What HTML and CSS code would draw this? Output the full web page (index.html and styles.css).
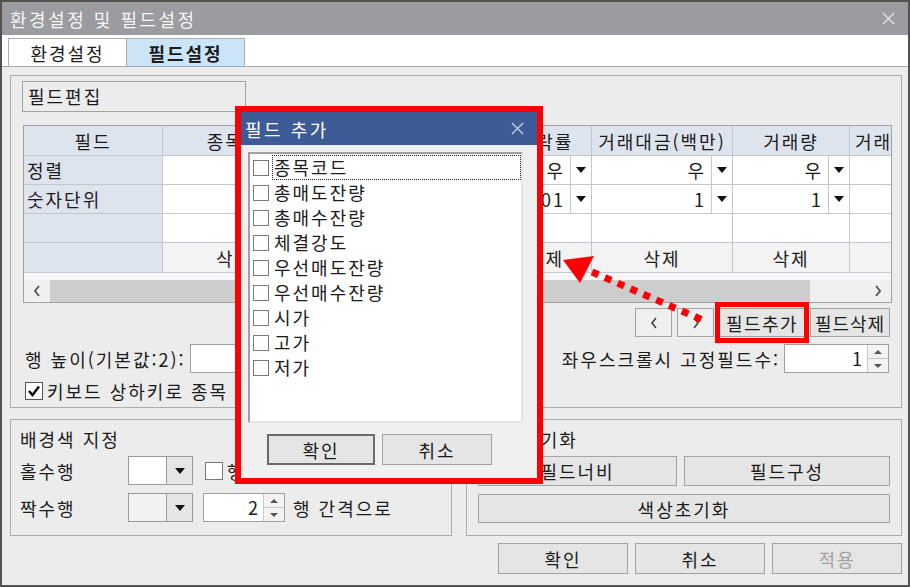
FILE: index.html
```html
<!DOCTYPE html>
<html lang="ko">
<head>
  <meta charset="UTF-8" />
  <title>환경설정 및 필드설정</title>
  <link rel="stylesheet" href="styles.css">
</head>
<body>

<div class="window">
  <div class="titlebar">
    <span class="title">환경설정 및 필드설정</span>
    <svg class="close" viewBox="0 0 14 14"><path d="M1 1L13 13M13 1L1 13" /></svg>
  </div>

  <div class="tabs">
    <div class="tab">환경설정</div>
    <div class="tab active">필드설정</div>
  </div>

  <div class="content">
    <div class="panel">
      <div class="caption">필드편집</div>

      <div class="grid">
        <table class="fields">
          <colgroup>
            <col><col><col><col><col><col><col>
          </colgroup>
          <tr>
            <th>필드</th><th>종목명</th><th>현재가</th><th>등락률</th><th>거래대금(백만)</th><th>거래량</th><th class="cut">거래</th>
          </tr>
          <tr>
            <td class="lbl">정렬</td>
            <td></td>
            <td><div class="cmb"><span class="v">우</span><span class="a"><i class="tri"></i></span></div></td>
            <td><div class="cmb"><span class="v">우</span><span class="a"><i class="tri"></i></span></div></td>
            <td><div class="cmb"><span class="v">우</span><span class="a"><i class="tri"></i></span></div></td>
            <td><div class="cmb"><span class="v">우</span><span class="a"><i class="tri"></i></span></div></td>
            <td></td>
          </tr>
          <tr>
            <td class="lbl">숫자단위</td>
            <td></td>
            <td><div class="cmb"><span class="v">1</span><span class="a"><i class="tri"></i></span></div></td>
            <td><div class="cmb"><span class="v">0.01</span><span class="a"><i class="tri"></i></span></div></td>
            <td><div class="cmb"><span class="v">1</span><span class="a"><i class="tri"></i></span></div></td>
            <td><div class="cmb"><span class="v">1</span><span class="a"><i class="tri"></i></span></div></td>
            <td></td>
          </tr>
          <tr class="blank">
            <td class="lbl"></td><td></td><td></td><td></td><td></td><td></td><td></td>
          </tr>
          <tr class="del">
            <td class="lbl"></td><td>삭제</td><td>삭제</td><td>삭제</td><td>삭제</td><td>삭제</td><td></td>
          </tr>
        </table>
        <div class="hscroll">
          <span class="sarr"><svg viewBox="0 0 8 12"><path d="M6 1L2 6L6 11" /></svg></span>
          <span class="thumb"></span>
          <span class="track"></span>
          <span class="sarr"><svg viewBox="0 0 8 12"><path d="M2 1L6 6L2 11" /></svg></span>
        </div>
      </div>

      <div class="navrow">
        <button class="btn nav"><svg viewBox="0 0 8 12"><path d="M6 1L2 6L6 11" /></svg></button>
        <button class="btn nav"><svg viewBox="0 0 8 12"><path d="M2 1L6 6L2 11" /></svg></button>
        <button class="btn field-add">필드추가</button>
        <button class="btn field-del">필드삭제</button>
      </div>

      <div class="optrow">
        <div class="opt">
          <span>행 높이(기본값:2):</span>
          <span class="textbox"></span>
        </div>
        <div class="opt">
          <span>좌우스크롤시 고정필드수:</span>
          <div class="spin fixed">
            <span class="val">1</span>
            <span class="spin-btns"><i><b class="up"></b></i><i><b class="dn"></b></i></span>
          </div>
        </div>
      </div>

      <div class="checkrow">
        <span class="chk on"><svg viewBox="0 0 16 16"><path d="M3 8L6.5 12L13 3.5" /></svg></span>
        <span>키보드 상하키로 종목 이동</span>
      </div>
    </div>

    <div class="groups">
      <div class="group bg">
        <div class="group-title">배경색 지정</div>
        <div class="bgrow">
          <span class="name">홀수행</span>
          <div class="combo"><span class="field"></span><span class="drop"><i class="tri"></i></span></div>
          <span class="chk"></span>
          <span class="chk-text">행 색상 사용</span>
        </div>
        <div class="bgrow">
          <span class="name">짝수행</span>
          <div class="combo off"><span class="field"></span><span class="drop"><i class="tri"></i></span></div>
          <div class="spin step">
            <span class="val">2</span>
            <span class="spin-btns"><i><b class="up"></b></i><i><b class="dn"></b></i></span>
          </div>
          <span class="after">행 간격으로</span>
        </div>
      </div>

      <div class="group reset">
        <div class="group-title">설정 초기화</div>
        <div class="reset-grid">
          <button class="btn">필드너비</button>
          <button class="btn">필드구성</button>
          <button class="btn wide">색상초기화</button>
        </div>
      </div>
    </div>

    <div class="actions">
      <button class="btn">확인</button>
      <button class="btn">취소</button>
      <button class="btn disabled">적용</button>
    </div>
  </div>

  <!-- 필드 추가 팝업 (빨간 강조 테두리) -->
  <div class="popup">
    <div class="popup-title">
      <span>필드 추가</span>
      <svg class="close" viewBox="0 0 14 14"><path d="M1 1L13 13M13 1L1 13" /></svg>
    </div>
    <div class="popup-body">
      <ul class="field-list">
        <li><span class="box"></span><span class="txt focus">종목코드</span></li>
        <li><span class="box"></span><span class="txt">총매도잔량</span></li>
        <li><span class="box"></span><span class="txt">총매수잔량</span></li>
        <li><span class="box"></span><span class="txt">체결강도</span></li>
        <li><span class="box"></span><span class="txt">우선매도잔량</span></li>
        <li><span class="box"></span><span class="txt">우선매수잔량</span></li>
        <li><span class="box"></span><span class="txt">시가</span></li>
        <li><span class="box"></span><span class="txt">고가</span></li>
        <li><span class="box"></span><span class="txt">저가</span></li>
      </ul>
      <div class="popup-btns">
        <button class="btn default">확인</button>
        <button class="btn">취소</button>
      </div>
    </div>
  </div>

  <svg class="pointer" viewBox="0 0 160 80">
    <path class="dots" d="M37 22L150 71" />
    <polygon points="8,10 39,6 25,33" />
  </svg>
  <div class="highlight"></div>
</div>

</body>
</html>
```

FILE: styles.css
```css
* {
  box-sizing: border-box;
}
body {
  margin: 0;
  font-family: "Noto Sans CJK KR", "Noto Sans", sans-serif;
  font-size: 18px;
  letter-spacing: 2px;
  color: #1b1b1b;
  background: #fff;
}
button {
  font: inherit;
  letter-spacing: inherit;
  color: inherit;
}

.window {
  position: relative;
  width: 910px;
  height: 587px;
  border: 2px solid #525252;
  background: #ececec;
  display: flex;
  flex-direction: column;
}

/* title bar */
.titlebar {
  flex: none;
  height: 33px;
  background: #9b9ca0;
  color: #f5f5f5;
  display: flex;
  align-items: center;
  justify-content: space-between;
  padding: 0 13px 0 8px;
}
.titlebar .title {
  letter-spacing: 2.5px;
}
.close {
  width: 13px;
  height: 13px;
  fill: none;
  stroke: #e4e4e4;
  stroke-width: 1.4;
}

/* tabs */
.tabs {
  flex: none;
  height: 32px;
  background: #fff;
  border-bottom: 1px solid #a9a9a9;
  display: flex;
  align-items: flex-end;
  padding-left: 6px;
}
.tab {
  width: 119px;
  height: 28px;
  border: 1px solid #acacac;
  border-bottom: none;
  display: flex;
  align-items: center;
  justify-content: center;
}
.tab + .tab {
  border-left: none;
}
.tab.active {
  width: 118px;
  background: #cce4f7;
  font-weight: bold;
}

.content {
  flex: 1;
  padding: 8px 6px 0 8px;
}

/* field edit panel */
.panel {
  height: 333px;
  border: 1px solid #adadad;
  padding: 5px 9px 0 11px;
}
.caption {
  width: 224px;
  height: 31px;
  border: 1px solid #a3a3a3;
  padding-left: 5px;
  line-height: 29px;
}

.grid {
  margin: 13px 0 0 1px;
  width: 869px;
  height: 178px;
  border: 1px solid #a0a0a0;
  background: #f7f7f7;
  overflow: hidden;
  display: flex;
  flex-direction: column;
}
.fields {
  border-collapse: separate;
  border-spacing: 0;
  table-layout: fixed;
  width: 976px;
  background: #fff;
}
.fields col:nth-child(1) { width: 139px; }
.fields col:nth-child(2) { width: 144px; }
.fields col:nth-child(3) { width: 193px; }
.fields col:nth-child(4) { width: 92px; }
.fields col:nth-child(5) { width: 141px; }
.fields col:nth-child(6) { width: 117px; }
.fields col:nth-child(7) { width: 150px; }
.fields th,
.fields td {
  height: 29px;
  padding: 0;
  border-right: 1px solid #c3c6cc;
  border-bottom: 1px solid #c3c6cc;
  font-weight: normal;
  text-align: center;
  white-space: nowrap;
  overflow: hidden;
}
.fields th {
  height: 30px;
  background: #dde4ee;
}
.fields th.cut {
  text-align: left;
  padding-left: 5px;
}
.fields td.lbl {
  background: #dde4ee;
  text-align: left;
  padding-left: 3px;
}
.fields tr.del td {
  height: 30px;
  background: #f3f3f3;
}
.fields tr.del td.lbl {
  background: #dde4ee;
}
.cmb {
  display: flex;
  height: 28px;
}
.cmb .v {
  flex: 1;
  text-align: right;
  padding-right: 5px;
  line-height: 28px;
}
.cmb .a {
  width: 21px;
  border-left: 1px solid #c3c6cc;
  display: flex;
  align-items: center;
  justify-content: center;
}
.tri {
  width: 0;
  height: 0;
  border-left: 5px solid transparent;
  border-right: 5px solid transparent;
  border-top: 6px solid #111;
}

.hscroll {
  margin-top: auto;
  height: 22px;
  display: flex;
  background: #f0f0f0;
}
.sarr {
  width: 26px;
  display: flex;
  align-items: center;
  justify-content: center;
}
.sarr svg,
.nav svg {
  width: 8px;
  height: 12px;
  fill: none;
  stroke: #5a5a5a;
  stroke-width: 2;
}
.thumb {
  width: 760px;
  background: #cdcdcd;
}
.track {
  flex: 1;
}

/* buttons */
.btn {
  height: 100%;
  padding: 0;
  background: #e5e5e5;
  border: 1px solid #a2a2a2;
  display: flex;
  align-items: center;
  justify-content: center;
}
.btn.disabled {
  color: #a3a3a3;
}

.navrow {
  height: 29px;
  margin: 5px 2px 0 0;
  display: flex;
  justify-content: flex-end;
  gap: 5px;
}
.navrow .nav {
  width: 37px;
  background: #efefef;
}
.navrow .nav svg {
  stroke: #333;
  stroke-width: 1.4;
}
.navrow .field-add {
  width: 86px;
  letter-spacing: 1.5px;
}
.navrow .field-del {
  width: 80px;
  letter-spacing: 1px;
}

.optrow {
  height: 29px;
  margin-top: 7px;
  padding: 0 3px;
  display: flex;
  justify-content: space-between;
  align-items: center;
}
.opt {
  display: flex;
  align-items: center;
  gap: 4px;
  height: 100%;
}
.textbox {
  width: 70px;
  height: 100%;
  background: #fff;
  border: 1px solid #a0a0a0;
}

.spin {
  height: 29px;
  display: flex;
  background: #fff;
  border: 1px solid #a0a0a0;
}
.spin .val {
  flex: 1;
  text-align: right;
  padding-right: 3px;
  line-height: 27px;
}
.spin-btns {
  width: 21px;
  display: flex;
  flex-direction: column;
  border-left: 1px solid #c8c8c8;
}
.spin-btns i {
  flex: 1;
  display: flex;
  align-items: center;
  justify-content: center;
  background: #f3f3f3;
}
.spin-btns i + i {
  border-top: 1px solid #c8c8c8;
}
.up,
.dn {
  width: 0;
  height: 0;
  border-left: 4px solid transparent;
  border-right: 4px solid transparent;
}
.up {
  border-bottom: 4px solid #555;
}
.dn {
  border-top: 4px solid #555;
}
.spin.fixed {
  width: 105px;
}
.spin.step {
  width: 82px;
  margin-left: 10px;
}

.checkrow {
  margin-top: 5px;
  padding-left: 3px;
  display: flex;
  align-items: center;
  gap: 4px;
}
.chk {
  width: 18px;
  height: 18px;
  background: #fff;
  border: 1px solid #555;
  display: flex;
}
.chk svg {
  width: 16px;
  height: 16px;
  fill: none;
  stroke: #000;
  stroke-width: 2.4;
}

/* bottom groups */
.groups {
  height: 117px;
  margin-top: 11px;
  display: flex;
  gap: 14px;
}
.group {
  border: 1px solid #adadad;
  padding: 8px 11px 0 9px;
}
.group.bg {
  width: 442px;
}
.group.reset {
  flex: 1;
  padding-left: 11px;
}
.group-title {
  height: 22px;
  line-height: 22px;
}
.bgrow {
  height: 29px;
  margin-top: 8px;
  display: flex;
  align-items: center;
}
.group-title + .bgrow {
  margin-top: 6px;
}
.bgrow .name {
  width: 108px;
}
.combo {
  width: 65px;
  height: 29px;
  display: flex;
  background: #fff;
  border: 1px solid #9a9a9a;
}
.combo.off {
  background: #f2f2f2;
}
.combo .field {
  flex: 1;
}
.combo .drop {
  width: 26px;
  background: #e6e6e6;
  border-left: 1px solid #9a9a9a;
  display: flex;
  align-items: center;
  justify-content: center;
}
.bgrow .chk {
  margin-left: 12px;
  border-color: #777;
}
.chk-text {
  margin-left: 4px;
}
.after {
  margin-left: 8px;
}

.reset-grid {
  margin-top: 6px;
  display: grid;
  grid-template-columns: 199px 1fr;
  grid-template-rows: 30px 29px;
  gap: 8px 7px;
}
.reset-grid .wide {
  grid-column: span 2;
}

.actions {
  height: 31px;
  margin-top: 7px;
  display: flex;
  justify-content: flex-end;
  gap: 7px;
}
.actions .btn {
  width: 130px;
}

/* popup over the grid */
.popup {
  position: absolute;
  left: 233px;
  top: 104px;
  width: 308px;
  height: 378px;
  border: 6px solid #f00;
  background: #f0f0f0;
  display: flex;
  flex-direction: column;
}
.popup-title {
  height: 33px;
  flex: none;
  background: #3c5b97;
  color: #fff;
  display: flex;
  align-items: center;
  justify-content: space-between;
  padding: 0 13px 0 4px;
  letter-spacing: 2.5px;
}
.popup-title .close {
  stroke: #c9d2e4;
}
.field-list {
  list-style: none;
  margin: 7px 0 0 7px;
  padding: 1px 0 0 3px;
  width: 275px;
  height: 271px;
  background: #fff;
  border: 2px solid #a0a0a0;
  border-right-color: #e4e4e4;
  border-bottom-color: #e4e4e4;
}
.field-list li {
  height: 25px;
  display: flex;
  align-items: center;
}
.field-list .box {
  width: 16px;
  height: 16px;
  border: 1px solid #7a7a7a;
  background: #fff;
}
.field-list .txt {
  margin-left: 3px;
  padding-left: 1px;
  height: 25px;
  line-height: 23px;
  border: 1px dotted transparent;
}
.field-list .txt.focus {
  width: 249px;
  border-color: #222;
}
.popup-btns {
  height: 31px;
  margin: 11px 0 0 26px;
  display: flex;
  gap: 7px;
}
.popup-btns .btn {
  width: 110px;
}
.popup-btns .default {
  width: 108px;
  border: 2px solid #6a6a6a;
}

.pointer {
  position: absolute;
  left: 553px;
  top: 248px;
  width: 160px;
  height: 80px;
  fill: #f00;
}
.pointer .dots {
  fill: none;
  stroke: #f00;
  stroke-width: 7;
  stroke-dasharray: 7 7;
}
.highlight {
  position: absolute;
  left: 713px;
  top: 300px;
  width: 94px;
  height: 41px;
  border: 5px solid #f00;
}
```
